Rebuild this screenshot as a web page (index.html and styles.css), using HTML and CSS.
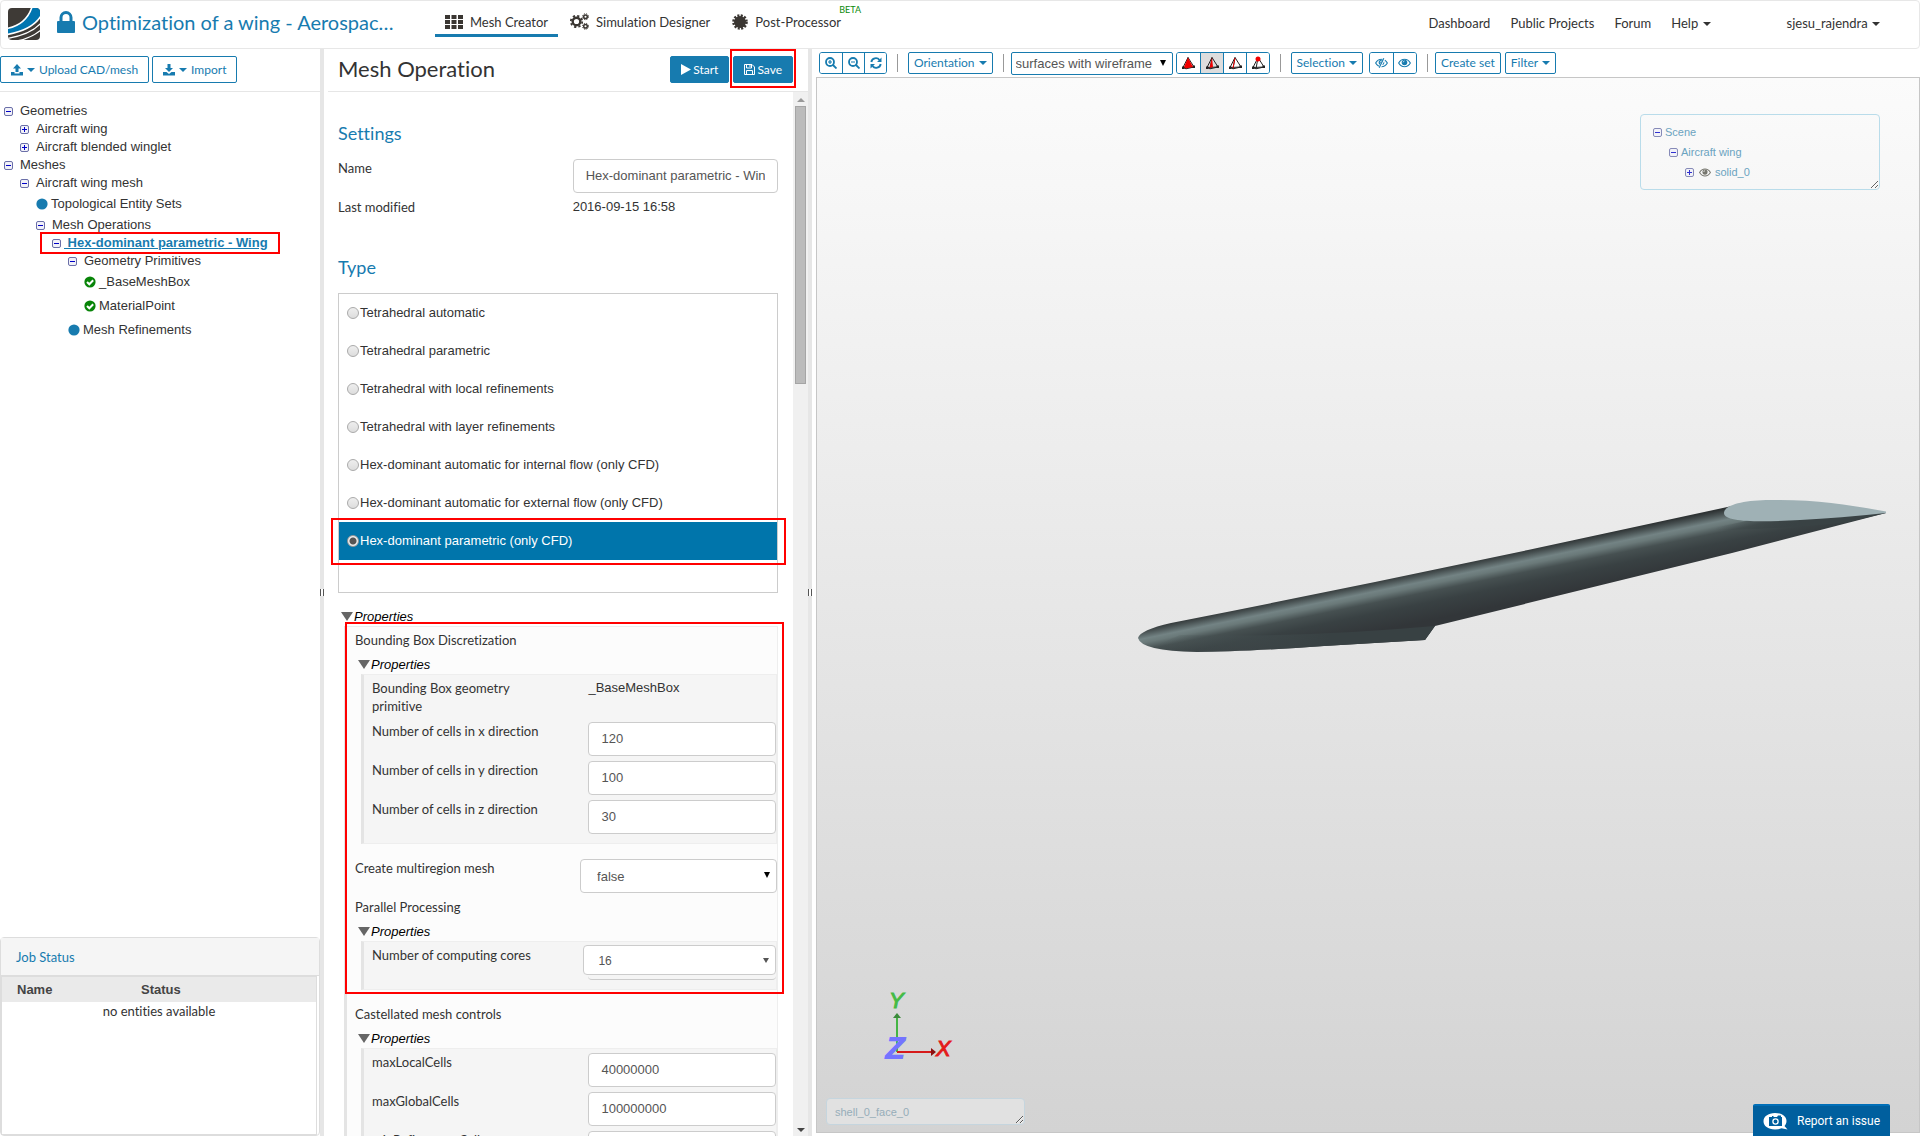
FILE: index.html
```html
<!DOCTYPE html>
<html lang="en">
<head>
    <meta charset="UTF-8">
    <title>Optimization of a wing - Mesh Creator</title>
    <link rel="stylesheet" href="styles.css">
</head>
<body>

<!-- shared icons -->
<svg class="defs" width="0" height="0">
    <symbol id="minus" viewBox="0 0 9 9">
        <rect x=".5" y=".5" width="8" height="8" rx="1.5" fill="#f1f1f8" stroke="#6a6fa8"/>
        <path d="M2 4.5h5" stroke="#0000c8"/>
    </symbol>
    <symbol id="plus" viewBox="0 0 9 9">
        <rect x=".5" y=".5" width="8" height="8" rx="1.5" fill="#f1f1f8" stroke="#6a6fa8"/>
        <path d="M2 4.5h5M4.5 2v5" stroke="#0000c8"/>
    </symbol>
    <symbol id="dot" viewBox="0 0 12 12"><circle cx="6" cy="6" r="5.6" fill="#177baf"/></symbol>
    <symbol id="check" viewBox="0 0 12 12">
        <circle cx="6" cy="6" r="5.6" fill="#088408"/>
        <path d="M3 6l2.300 2.300L9.200 4.300" fill="none" stroke="#fff" stroke-width="2"/>
    </symbol>
    <symbol id="eye" viewBox="0 0 14 10">
        <path d="M.7 5Q3 1 7 1t6.300 4Q11 9 7 9T.7 5z" fill="none" stroke="currentColor" stroke-width="1.200"/>
        <circle cx="7" cy="4.500" r="3" fill="currentColor"/>
        <path d="M5.500 4.300Q5.600 3 7 2.800" fill="none" stroke="#fff" stroke-width=".8"/>
    </symbol>
    <symbol id="tetra" viewBox="0 0 14 14">
        <path d="M7 1.500L2 11.500l3 1.300 8-1.800zM7 1.500L5 12.800M2 11.500l11-.5" fill="none" stroke="#222"/>
        <path d="M1 10.500h2.500V13H1zM11.500 9.500H14V12h-2.500z" fill="#222"/>
    </symbol>
</svg>

<header class="topbar">
    <a class="logo" href="#" aria-label="Home">
        <svg width="32" height="32" viewBox="0 0 32 32">
            <defs><clipPath id="logo-clip"><rect width="32" height="32" rx="4"/></clipPath></defs>
            <g clip-path="url(#logo-clip)">
                <rect width="32" height="32" fill="#3e3a36"/>
                <path d="M-1 20.500C12 18 20 11 24-1h9v9C26 19 14 24-1 26.500z" fill="#0075b0"/>
                <path d="M-1 20.500C12 18 20 11 24-1M-1 26.500C14 24 26 19 33 8" fill="none" stroke="#fff" stroke-width="1.600"/>
                <path d="M-1 30.500C14 28 25 24 33 15M8 33q14-2 25-11" fill="none" stroke="#fff" stroke-width="1.300"/>
            </g>
        </svg>
    </a>
    <a class="project" href="#">
        <svg width="18" height="22" viewBox="0 0 18 22">
            <path d="M4 11V6.500a5 5 0 0 1 10 0V11" fill="none" stroke="#177baf" stroke-width="3"/>
            <rect y="10" width="18" height="12" rx="1" fill="#177baf"/>
        </svg>
        <span>Optimization of a wing - Aerospac…</span>
    </a>
    <nav class="modes">
        <a class="mode active" href="#">
            <svg width="18" height="14" viewBox="0 0 18 14" fill="#3a3632">
                <path d="M0 0h5v4H0zM6.500 0h5v4h-5zM13 0h5v4h-5zM0 5h5v4H0zM6.500 5h5v4h-5zM13 5h5v4h-5zM0 10h5v4H0zM6.500 10h5v4h-5zM13 10h5v4h-5z"/>
            </svg>
            <span>Mesh Creator</span>
        </a>
        <a class="mode" href="#">
            <svg width="19" height="17" viewBox="0 0 19 17" fill="none" stroke="#3a3632">
                <circle cx="6.500" cy="8.500" r="3.800" stroke-width="2.400"/>
                <circle cx="6.500" cy="8.500" r="5.700" stroke-width="1.800" stroke-dasharray="2.240 2.240"/>
                <circle cx="15.500" cy="3.700" r="1.800" stroke-width="1.500"/>
                <circle cx="15.500" cy="3.700" r="3" stroke-width="1" stroke-dasharray="1.200 1.200"/>
                <circle cx="15.500" cy="13.300" r="1.800" stroke-width="1.500"/>
                <circle cx="15.500" cy="13.300" r="3" stroke-width="1" stroke-dasharray="1.200 1.200"/>
            </svg>
            <span>Simulation Designer</span>
        </a>
        <a class="mode" href="#">
            <svg width="16" height="16" viewBox="0 0 16 16">
                <circle cx="8" cy="8" r="6" fill="#3a3632"/>
                <circle cx="8" cy="8" r="6.500" fill="none" stroke="#3a3632" stroke-width="2.600" stroke-dasharray="2 1.400"/>
            </svg>
            <span>Post-Processor</span>
            <sup class="beta">BETA</sup>
        </a>
    </nav>
    <nav class="links">
        <a href="#">Dashboard</a>
        <a href="#">Public Projects</a>
        <a href="#">Forum</a>
        <a href="#">Help <i class="caret"></i></a>
        <a class="user" href="#">sjesu_rajendra <i class="caret"></i></a>
    </nav>
</header>

<main class="workspace">

    <!-- project tree -->
    <aside class="sidebar">
        <div class="side_tools">
            <button type="button" class="btn">
                <svg width="12" height="12" viewBox="0 0 12 12" fill="currentColor"><path d="M6 0l4 4.500H7.500V8h-3V4.500H2zM0 8h3.500v1.500h5V8H12v3.500H0z"/></svg>
                <i class="caret"></i>
                Upload CAD/mesh
            </button>
            <button type="button" class="btn">
                <svg width="12" height="12" viewBox="0 0 12 12" fill="currentColor"><path d="M6 8l4-4H7.500V0h-3v4H2zM0 8h3.500L6 10l2.500-2H12v3.500H0z"/></svg>
                <i class="caret"></i>
                Import
            </button>
        </div>

        <ul class="tree">
            <li><div class="node"><svg class="tgl"><use href="#minus"/></svg>Geometries</div>
                <ul>
                    <li><div class="node"><svg class="tgl"><use href="#plus"/></svg>Aircraft wing</div></li>
                    <li><div class="node"><svg class="tgl"><use href="#plus"/></svg>Aircraft blended winglet</div></li>
                </ul>
            </li>
            <li><div class="node"><svg class="tgl"><use href="#minus"/></svg>Meshes</div>
                <ul>
                    <li><div class="node"><svg class="tgl"><use href="#minus"/></svg>Aircraft wing mesh</div>
                        <ul>
                            <li><div class="node leaf"><svg class="state"><use href="#dot"/></svg>Topological Entity Sets</div></li>
                            <li><div class="node"><svg class="tgl"><use href="#minus"/></svg>Mesh Operations</div>
                                <ul>
                                    <li><div class="node marked"><svg class="tgl"><use href="#minus"/></svg><a class="current" href="#">&nbsp;Hex-dominant parametric - Wing</a></div>
                                        <ul>
                                            <li><div class="node"><svg class="tgl"><use href="#minus"/></svg>Geometry Primitives</div>
                                                <ul>
                                                    <li><div class="node leaf"><svg class="state"><use href="#check"/></svg>_BaseMeshBox</div></li>
                                                    <li><div class="node leaf"><svg class="state"><use href="#check"/></svg>MaterialPoint</div></li>
                                                </ul>
                                            </li>
                                            <li><div class="node leaf"><svg class="state"><use href="#dot"/></svg>Mesh Refinements</div></li>
                                        </ul>
                                    </li>
                                </ul>
                            </li>
                        </ul>
                    </li>
                </ul>
            </li>
        </ul>

        <section class="jobs">
            <h3>Job Status</h3>
            <div class="jobs_body">
                <table>
                    <thead><tr><th>Name</th><th>Status</th></tr></thead>
                    <tbody><tr><td colspan="2">no entities available</td></tr></tbody>
                </table>
            </div>
        </section>
    </aside>

    <div class="splitter"><span></span></div>

    <!-- mesh operation form -->
    <section class="panel">
        <div class="panel_head">
            <h1>Mesh Operation</h1>
            <button type="button" class="btn primary">
                <svg width="10" height="11" viewBox="0 0 10 11"><path d="M0 0l10 5.500L0 11z" fill="#fff"/></svg>Start
            </button>
            <button type="button" class="btn primary marked">
                <svg width="11" height="11" viewBox="0 0 11 11" fill="none" stroke="#fff"><path d="M.5.5h7.500l2.500 2.500v7.500H.5zM2.500.5v3.500h5V.5M2.500 10.500v-4h6v4M6 1v2"/></svg>Save
            </button>
        </div>
        <div class="panel_main">
            <form class="form">
                <section class="settings">
                    <h2>Settings</h2>
                    <div class="row">
                        <label for="name">Name</label>
                        <input type="text" id="name" value="Hex-dominant parametric - Wing">
                    </div>
                    <div class="row">
                        <span class="label">Last modified</span>
                        <span class="value">2016-09-15 16:58</span>
                    </div>
                </section>

                <section class="type">
                    <h2>Type</h2>
                    <div class="options">
                        <label><input type="radio" name="type">Tetrahedral automatic</label>
                        <label><input type="radio" name="type">Tetrahedral parametric</label>
                        <label><input type="radio" name="type">Tetrahedral with local refinements</label>
                        <label><input type="radio" name="type">Tetrahedral with layer refinements</label>
                        <label><input type="radio" name="type">Hex-dominant automatic for internal flow (only CFD)</label>
                        <label><input type="radio" name="type">Hex-dominant automatic for external flow (only CFD)</label>
                        <label class="selected marked"><input type="radio" name="type" checked>Hex-dominant parametric (only CFD)</label>
                    </div>
                </section>

                <details class="props root" open>
                    <summary>Properties</summary>
                    <div class="box">
                        <div class="group marked">
                            <p class="title">Bounding Box Discretization</p>
                            <details class="props" open>
                                <summary>Properties</summary>
                                <div class="box">
                                    <div class="row">
                                        <span class="label">Bounding Box geometry primitive</span>
                                        <span class="value">_BaseMeshBox</span>
                                    </div>
                                    <div class="row">
                                        <label for="cells-x">Number of cells in x direction</label>
                                        <input type="text" id="cells-x" value="120">
                                    </div>
                                    <div class="row">
                                        <label for="cells-y">Number of cells in y direction</label>
                                        <input type="text" id="cells-y" value="100">
                                    </div>
                                    <div class="row">
                                        <label for="cells-z">Number of cells in z direction</label>
                                        <input type="text" id="cells-z" value="30">
                                    </div>
                                </div>
                            </details>
                            <div class="row">
                                <label for="multiregion">Create multiregion mesh</label>
                                <div class="select">
                                    <select id="multiregion"><option>false</option><option>true</option></select>
                                </div>
                            </div>
                            <p class="title">Parallel Processing</p>
                            <details class="props" open>
                                <summary>Properties</summary>
                                <div class="box">
                                    <div class="row">
                                        <label for="cores">Number of computing cores</label>
                                        <div class="select combo">
                                            <select id="cores"><option>16</option><option>8</option></select>
                                        </div>
                                    </div>
                                </div>
                            </details>
                        </div>
                        <div class="group">
                            <p class="title">Castellated mesh controls</p>
                            <details class="props" open>
                                <summary>Properties</summary>
                                <div class="box">
                                    <div class="row">
                                        <label for="max-local">maxLocalCells</label>
                                        <input type="text" id="max-local" value="40000000">
                                    </div>
                                    <div class="row">
                                        <label for="max-global">maxGlobalCells</label>
                                        <input type="text" id="max-global" value="100000000">
                                    </div>
                                    <div class="row">
                                        <label for="min-ref">minRefinementCells</label>
                                        <input type="text" id="min-ref" value="10">
                                    </div>
                                </div>
                            </details>
                        </div>
                    </div>
                </details>
            </form>
            <div class="scrollbar"><i class="up"></i><div class="thumb"></div><i class="down"></i></div>
        </div>
    </section>

    <div class="splitter"><span></span></div>

    <!-- 3d viewer -->
    <section class="viewer">
        <div class="tools">
            <div class="btn_group zoom">
                <button type="button" aria-label="Zoom in"><svg width="12" height="12" viewBox="0 0 12 12" fill="none" stroke="currentColor" stroke-width="1.800"><circle cx="5" cy="5" r="4"/><path d="M8 8l3.500 3.500"/><path d="M3 5h4M5 3v4" stroke-width="1.200"/></svg></button>
                <button type="button" aria-label="Zoom out"><svg width="12" height="12" viewBox="0 0 12 12" fill="none" stroke="currentColor" stroke-width="1.800"><circle cx="5" cy="5" r="4"/><path d="M8 8l3.500 3.500"/><path d="M3 5h4" stroke-width="1.200"/></svg></button>
                <button type="button" aria-label="Reset view"><svg width="12" height="12" viewBox="0 0 12 12" fill="none" stroke="currentColor" stroke-width="1.900"><path d="M1.300 5A4.600 4.600 0 0 1 9.500 3M10.700 7A4.600 4.600 0 0 1 2.500 9"/><path d="M11.500.5V5H7zM.5 11.500V7H5z" fill="currentColor" stroke="none"/></svg></button>
            </div>
            <i class="sep"></i>
            <button type="button" class="btn small drop">Orientation <i class="caret"></i></button>
            <i class="sep"></i>
            <div class="select render_mode">
                <select aria-label="Render mode"><option>surfaces with wireframe</option><option>surfaces</option></select>
            </div>
            <div class="btn_group picks">
                <button type="button" aria-label="Pick volumes"><svg width="14" height="14"><use href="#tetra"/><path d="M7 1.500L3 11l2 1.500 7-1.500z" fill="#f00000"/></svg></button>
                <button type="button" class="on" aria-label="Pick faces"><svg width="14" height="14"><use href="#tetra"/><path d="M7 1.500L4.500 12 8 11z" fill="#f00000"/></svg></button>
                <button type="button" aria-label="Pick edges"><svg width="14" height="14"><use href="#tetra"/><path d="M7 2L5 12" stroke="#f00000"/></svg></button>
                <button type="button" aria-label="Pick nodes"><svg width="14" height="14"><use href="#tetra"/><circle cx="7" cy="3" r="2.500" fill="#f00000"/></svg></button>
            </div>
            <i class="sep"></i>
            <button type="button" class="btn small drop">Selection <i class="caret"></i></button>
            <div class="btn_group eyes">
                <button type="button" aria-label="Hide selection"><svg width="13" height="10" viewBox="0 0 14 10"><use href="#eye"/><path d="M10 0L5 10" stroke="#fff" stroke-width="2.600"/><path d="M9.500 0L4.500 10" stroke="currentColor" stroke-width="1.200"/></svg></button>
                <button type="button" aria-label="Show all"><svg width="13" height="10" viewBox="0 0 14 10"><use href="#eye"/></svg></button>
            </div>
            <i class="sep"></i>
            <button type="button" class="btn small create">Create set</button>
            <button type="button" class="btn small">Filter <i class="caret"></i></button>
        </div>

        <div class="canvas">
            <svg class="scene_view" viewBox="817 78 1102 1054" preserveAspectRatio="xMidYMid meet">
                <defs>
                    <linearGradient id="skin" gradientUnits="userSpaceOnUse" x1="1528" y1="549" x2="1538" y2="598">
                        <stop offset="0" stop-color="#2e3334"/>
                        <stop offset=".09" stop-color="#485152"/>
                        <stop offset=".22" stop-color="#738384"/>
                        <stop offset=".3" stop-color="#6a7979"/>
                        <stop offset=".44" stop-color="#465051"/>
                        <stop offset=".65" stop-color="#394143"/>
                        <stop offset="1" stop-color="#323639"/>
                    </linearGradient>
                    <linearGradient id="tip" gradientUnits="userSpaceOnUse" x1="1150" y1="0" x2="1330" y2="0">
                        <stop offset="0" stop-color="#4d595a" stop-opacity="0"/>
                        <stop offset="1" stop-color="#384143"/>
                    </linearGradient>
                    <linearGradient id="root" gradientUnits="userSpaceOnUse" x1="1715" y1="0" x2="1800" y2="0">
                        <stop offset="0" stop-color="#394244" stop-opacity="0"/>
                        <stop offset="1" stop-color="#394244"/>
                    </linearGradient>
                </defs>
                <path d="M1138 638Q1140 630 1171 623L1232 611 1375 582 1528 550 1732 506 1886 513 1732 553 1435 626 1425 640 1324 646Q1240 652 1197 652 1141 651 1138 638z" fill="url(#skin)"/>
                <path d="M1180 635Q1300 638 1435 626L1425 640 1324 646Q1240 652 1197 652 1160 651 1150 648z" fill="url(#tip)"/>
                <path d="M1700 531Q1790 529 1848 522L1886 513 1760 518z" fill="url(#root)"/>
                <path d="M1724 513C1724 505 1744 500 1770 500 1815 499 1850 505 1886 511.500L1886 513Q1840 518 1800 520C1764 522 1724 523 1724 513z" fill="#9fb1b5"/>

                <!-- axes -->
                <path d="M897 1052v-34" stroke="#44b544" stroke-width="2"/>
                <path d="M897 1013l4 5h-8z" fill="#3a8a3a"/>
                <path d="M897 1052h34" stroke="#d61a1a" stroke-width="2"/>
                <path d="M936 1052l-5-4v8z" fill="#8c1010"/>
                <text class="axis y" x="889" y="1008">Y</text>
                <text class="axis x" x="936" y="1056">X</text>
                <text class="axis z" x="886" y="1058">Z</text>
            </svg>

            <div class="scene_box">
                <ul class="scene">
                    <li><div><svg class="tgl"><use href="#minus"/></svg>Scene</div>
                        <ul>
                            <li><div><svg class="tgl"><use href="#minus"/></svg>Aircraft wing</div>
                                <ul>
                                    <li><div><svg class="tgl"><use href="#plus"/></svg><svg class="eye"><use href="#eye"/></svg>solid_0</div></li>
                                </ul>
                            </li>
                        </ul>
                    </li>
                </ul>
            </div>
            <div class="hover_info">shell_0_face_0</div>
        </div>
    </section>
</main>

<button type="button" class="report">
    <svg width="25" height="17" viewBox="0 0 25 17">
        <path d="M12 0C19 0 23.500 3.500 23.500 8c0 2-.8 3.800-2 5l3 3.500-6-1.200Q15.500 16.500 12 16.500C5 16.500.5 13 .5 8.300S5 0 12 0z" fill="#fff"/>
        <path d="M6 4h3V3h1.500v1H14l1-1.500h3V4h1v9H6z" fill="#005f9e"/>
        <circle cx="12.500" cy="8.500" r="2.600" fill="none" stroke="#fff" stroke-width="1.300"/>
    </svg>
    Report an issue
</button>

</body>
</html>
```
FILE: styles.css
```css
*{
    margin: 0;
    padding: 0;
    box-sizing: border-box;
}
body{
    height: 100vh;
    display: flex;
    flex-direction: column;
    overflow: hidden;
    background: #fff;
    color: #333;
    font: 13px/18px Lato, sans-serif;
}
body,button,input,select,h1,h2,h3{
    font-variant-ligatures: none;
}
a{
    color: inherit;
    text-decoration: none;
}
ul{
    list-style: none;
}
svg{
    flex: none;
}
.defs{
    position: absolute;
}
button,input,select{
    font-family: inherit;
    font-size: inherit;
    line-height: inherit;
    color: inherit;
}
.caret{
    display: inline-block;
    border: 4px solid transparent;
    border-top-color: currentColor;
    border-bottom: 0;
    vertical-align: middle;
}

/* red callout frames */
.marked{
    position: relative;
}
.marked::after{
    content: "";
    position: absolute;
    border: 2px solid #f00;
    pointer-events: none;
}

/* top bar */
.topbar{
    flex: none;
    height: 49px;
    display: flex;
    align-items: center;
    border: 1px solid #e7e7e7;
    border-radius: 4px;
    padding: 0 39px 2px 7px;
}
.logo{
    height: 32px;
}
.project{
    display: flex;
    align-items: center;
    gap: 7px;
    width: 361px;
    margin: 0 17px;
    padding-bottom: 4px;
    color: #177baf;
    font-size: 20px;
    line-height: 24px;
    white-space: nowrap;
}
.modes{
    display: flex;
    align-self: flex-end;
    gap: 2px;
    margin-bottom: 9px;
}
.mode{
    position: relative;
    display: flex;
    align-items: center;
    gap: 7px;
    height: 30px;
    padding: 2px 10px 0;
    border-bottom: 3px solid transparent;
}
.mode.active{
    border-color: #177baf;
}
.beta{
    position: absolute;
    top: -3px;
    right: -10px;
    color: #0a8a0a;
    font-size: 9px;
    line-height: 12px;
}
.links{
    display: flex;
    gap: 20px;
    margin-left: auto;
    padding-bottom: 2px;
}
.user{
    margin-left: 56px;
}
.links .caret{
    margin-left: 1px;
}

.workspace{
    flex: 1;
    min-height: 0;
    display: flex;
}
.splitter{
    flex: none;
    width: 4px;
    background: #e6e6e6;
    display: flex;
    align-items: center;
}
.splitter span{
    width: 4px;
    height: 7px;
    border: 1px solid #555;
    border-width: 0 1px;
    background: #fff;
}

/* buttons */
.btn{
    height: 27px;
    display: flex;
    align-items: center;
    gap: 4px;
    padding: 0 10px;
    border: 1px solid #177baf;
    border-radius: 2px;
    background: #fff;
    color: #177baf;
    font-size: 12px;
    white-space: nowrap;
}
.btn.primary{
    gap: 2px;
    background: #177baf;
    color: #fff;
}
.btn.marked::after{
    inset: -8px -4px -6px;
}
.btn.small{
    height: 22px;
    padding: 0 5px;
}

/* sidebar */
.sidebar{
    flex: none;
    width: 320px;
    display: flex;
    flex-direction: column;
}
.side_tools{
    display: flex;
    gap: 3px;
    height: 43px;
    padding-top: 7px;
    border-bottom: 1px solid #e6e6e6;
}
.tree{
    flex: 1;
    padding: 10px 0 0 4px;
    font: 13px/18px "Liberation Sans", Arial, sans-serif;
}
.tree ul{
    padding-left: 16px;
}
.node{
    display: flex;
    align-items: center;
    gap: 7px;
    width: max-content;
    height: 18px;
}
.node.leaf{
    gap: 3px;
    height: 24px;
}
.tgl{
    width: 9px;
    height: 9px;
}
.state{
    width: 12px;
    height: 12px;
}
.node.marked{
    gap: 3px;
}
.node.marked::after{
    inset: -2px -12px -2px;
}
.current{
    color: #177baf;
    font-weight: bold;
    text-decoration: underline;
}
.jobs{
    height: 199px;
    display: flex;
    flex-direction: column;
    border: 1px solid #ddd;
    border-radius: 4px;
}
.jobs h3{
    padding: 10px 15px 9px;
    background: #f5f5f5;
    border-bottom: 1px solid #ddd;
    color: #177baf;
    font-weight: normal;
    font-size: 13px;
}
.jobs_body{
    flex: 1;
    margin: 0 2px 0 0;
    border: 1px solid #ddd;
}
.jobs table{
    width: 100%;
    border-collapse: collapse;
    table-layout: fixed;
}
.jobs th{
    height: 25px;
    padding-left: 15px;
    background: #eaeaea;
    color: #444;
    font: bold 13px/18px "Liberation Sans", Arial, sans-serif;
    text-align: left;
}
.jobs th:first-child{
    width: 124px;
}
.jobs td{
    text-align: center;
}

/* form panel */
.panel{
    flex: none;
    width: 484px;
    display: flex;
    flex-direction: column;
}
.panel_head{
    display: flex;
    align-items: flex-start;
    gap: 4px;
    height: 43px;
    margin-left: 4px;
    padding: 7px 15px 0 10px;
    border-bottom: 1px solid #e6e6e6;
}
.panel_head h1{
    flex: 1;
    font-size: 22px;
    line-height: 26px;
    font-weight: normal;
}
.panel_main{
    flex: 1;
    min-height: 0;
    display: flex;
}
.form{
    flex: 1;
    padding: 0 15px 0 14px;
    overflow: hidden;
}
.form h2{
    margin-bottom: 14px;
    color: #177baf;
    font-size: 18px;
    line-height: 24px;
    font-weight: normal;
}
.settings{
    padding-top: 29px;
}
.type{
    padding: 18px 0 14px;
}
.row{
    display: grid;
    grid-template-columns: 8fr 7fr;
    align-items: start;
    min-height: 34px;
    margin-bottom: 5px;
}
.box .box .row{
    grid-template-columns: 15fr 13fr;
}
.row > label,.row > .label{
    max-width: 180px;
    padding-bottom: 2px;
}
.value{
    font: 13px/18px "Liberation Sans", Arial, sans-serif;
}
.form input[type=text],.form select{
    width: 100%;
    height: 34px;
    padding: 0 12px 2px;
    border: 1px solid #ccc;
    border-radius: 4px;
    background: #fff;
    color: #555;
    font: 13px/18px "Liberation Sans", Arial, sans-serif;
}
.select{
    position: relative;
}
.select select{
    appearance: none;
}
.select::after{
    content: "";
    position: absolute;
    right: 7px;
    top: 50%;
    margin-top: -4px;
    border: 3px solid transparent;
    border-top: 6px solid #000;
    border-bottom: 0;
    pointer-events: none;
}
.form .select select{
    padding: 1px 16px 0;
}
.combo{
    height: 34px;
    border-bottom: 1px solid #ccc;
    border-radius: 4px;
}
.form .combo select{
    width: calc(100% + 5px);
    height: 30px;
    margin: -1px 0 0 -5px;
    padding: 1px 14px 0;
    font-size: 12px;
}
.combo::after{
    margin-top: -5px;
    border-width: 5px 3px 0;
    border-top-color: #555;
}
.options{
    min-height: 300px;
    border: 1px solid #ccc;
    font: 13px/18px "Liberation Sans", Arial, sans-serif;
}
.options label{
    display: flex;
    align-items: center;
    gap: 1px;
    height: 38px;
    padding-left: 8px;
}
.options .selected{
    background: #0075ab;
    color: #fff;
}
.options .marked::after{
    inset: -4px -9px -5px -8px;
}
.options input{
    appearance: none;
    width: 12px;
    height: 12px;
    border: 1px solid #aaa;
    border-radius: 50%;
    background: linear-gradient(#eee, #ddd);
}
.options input:checked{
    border-color: #999;
    background: radial-gradient(#555 0 3px, #eee 4px);
}
.props summary{
    display: flex;
    align-items: center;
    gap: 1px;
    padding-left: 3px;
    color: #000;
    font: italic 13px/19px "Liberation Sans", Arial, sans-serif;
}
.props summary::before{
    content: "";
    border: 6px solid transparent;
    border-top: 9px solid #666;
    border-bottom: 0;
}
.box{
    margin: 0 0 15px 6px;
    padding: 4px 0 4px 8px;
    border: 1px solid #eee;
    border-left: 3px solid #e4e4e4;
    background: #f5f5f5;
}
.root > .box{
    background: #fcfcfc;
}
.title{
    margin-bottom: 6px;
}
.group.marked::after{
    inset: -9px -7px -4px -10px;
}
.scrollbar{
    flex: none;
    width: 15px;
    padding: 6px 2px 4px;
    display: flex;
    flex-direction: column;
    align-items: center;
    background: #f0f0f0;
}
.scrollbar .up{
    border: 4px solid transparent;
    border-bottom-color: #999;
    border-top: 0;
}
.thumb{
    width: 11px;
    height: 278px;
    margin: 4px 0 auto;
    border: 1px solid #a5a5a5;
    background: #bbb;
}
.scrollbar .down{
    border: 4px solid transparent;
    border-top-color: #444;
    border-bottom: 0;
}

/* viewer */
.viewer{
    flex: 1;
    min-width: 0;
    display: flex;
    flex-direction: column;
    padding: 3px 0 3px 4px;
}
.tools{
    display: flex;
    align-items: flex-start;
    height: 25px;
    padding-left: 3px;
    color: #177baf;
}
.sep{
    width: 1px;
    height: 18px;
    margin: 2px 7px 0 10px;
    background: #999;
}
.drop{
    margin-left: 3px;
}
.btn_group{
    display: flex;
    height: 22px;
    border: 1px solid #177baf;
    border-radius: 3px;
    overflow: hidden;
}
.btn_group button{
    width: 22px;
    display: flex;
    align-items: center;
    justify-content: center;
    border: 0;
    background: #fff;
}
.btn_group button + button{
    border-left: 1px solid #177baf;
}
.picks button,.eyes button{
    width: 23px;
}
.btn_group .on{
    background: #ddd;
}
.picks{
    margin-left: 3px;
}
.eyes{
    margin-left: 6px;
}
.create{
    margin-right: 4px;
}
.render_mode select{
    width: 162px;
    height: 23px;
    padding: 1px 4px 0;
    border: 1px solid #177baf;
    border-radius: 2px;
    background: #fff;
    color: #555;
    font: 13px/18px "Liberation Sans", Arial, sans-serif;
}
.canvas{
    position: relative;
    flex: 1;
    min-height: 0;
    border: 1px solid #c6c6c6;
    background: linear-gradient(#fbfbfb, #d3d3d3);
}
.scene_view{
    display: block;
    width: 100%;
    height: 100%;
}
.axis{
    font: italic 22px "Liberation Sans", Arial, sans-serif;
}
.axis.x{
    fill: #e31a1a;
    stroke: #e31a1a;
}
.axis.y{
    fill: #44bb44;
    stroke: #44bb44;
}
.axis.z{
    fill: #7474ff;
    stroke: #7474ff;
    stroke-width: 2px;
    font-size: 30px;
}
.scene_box,.hover_info{
    position: absolute;
    overflow: hidden;
    resize: both;
    border: 1px solid #b9dcea;
    border-radius: 4px;
    font: 11px/20px "Liberation Sans", Arial, sans-serif;
}
.scene_box{
    top: 36px;
    right: 39px;
    width: 240px;
    height: 76px;
    padding: 7px 12px;
    color: #6ba3c0;
}
.scene ul{
    padding-left: 16px;
}
.scene div{
    display: flex;
    align-items: center;
    gap: 3px;
}
.scene .tgl{
    opacity: .8;
}
.scene .eye{
    width: 12px;
    height: 9px;
    margin: 0 1px 0 2px;
    color: #77776f;
}
.hover_info{
    left: 9px;
    bottom: 7px;
    width: 199px;
    height: 27px;
    padding: 3px 8px;
    border-color: #c5d5de;
    background: #e1e1e1;
    color: #96adb9;
}
.report{
    position: fixed;
    right: 30px;
    bottom: 0;
    height: 32px;
    display: flex;
    align-items: center;
    gap: 9px;
    padding: 0 10px;
    border: 0;
    border-top: 2px solid #006fb8;
    border-radius: 2px 2px 0 0;
    background: #005f9e;
    color: #fff;
    font: 12px/18px Roboto, sans-serif;
}
```
